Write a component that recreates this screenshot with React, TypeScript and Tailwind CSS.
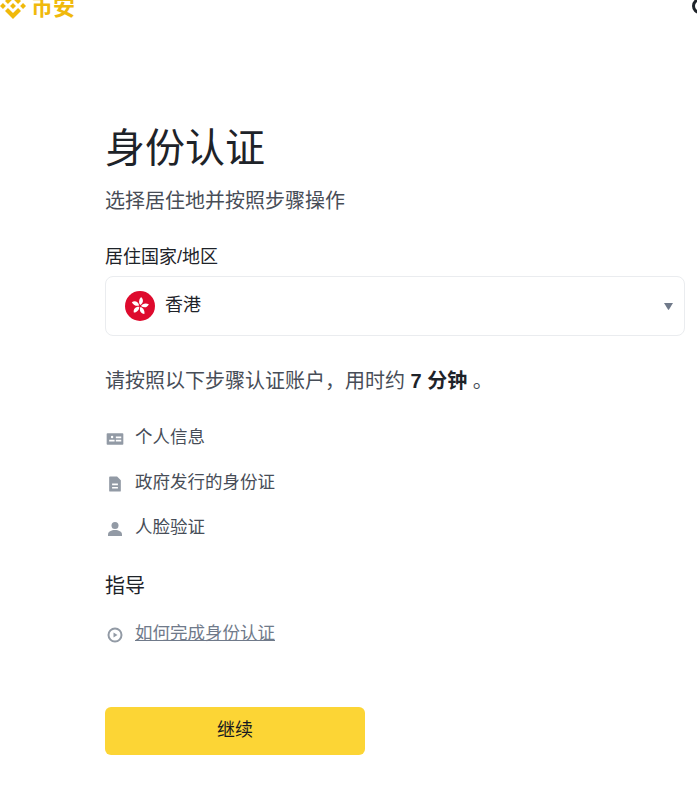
import type { ReactNode } from "react"

const font = "font-['Liberation_Sans','Noto_Sans_CJK_SC',sans-serif]"

const steps: { label: string; icon: ReactNode }[] = [
  {
    label: "个人信息",
    icon: (
      <path
        fillRule="evenodd"
        d="M3 5h18a1 1 0 0 1 1 1v12a1 1 0 0 1-1 1H3a1 1 0 0 1-1-1V6a1 1 0 0 1 1-1zm5.500 3a1.500 1.500 0 1 0 0 3 1.500 1.500 0 0 0 0-3zM5 13v2h6.500v-2H5zm8-4v2h6.500V9H13zm0 4v2h6.500v-2H13z"
      />
    ),
  },
  {
    label: "政府发行的身份证",
    icon: (
      <path
        fillRule="evenodd"
        d="M6 3h8.500L19 7.500V20a1 1 0 0 1-1 1H6a1 1 0 0 1-1-1V4a1 1 0 0 1 1-1zm2.500 8.500v2h7v-2h-7zm0 4v2h7v-2h-7z"
      />
    ),
  },
  {
    label: "人脸验证",
    icon: (
      <>
        <circle cx="12" cy="7.800" r="4.200" />
        <path d="M3.600 20.500v-2c0-3.300 4-5.300 8.400-5.300s8.400 2 8.400 5.300v2z" />
      </>
    ),
  },
]

function BinanceMark() {
  return (
    <svg viewBox="0 0 126.610 126.610" className="h-[26px] w-[26px] shrink-0 fill-[#F0B90B]">
      <path d="M38.730 53.200l24.590-24.580 24.600 24.600 14.300-14.310L63.320 0 24.430 38.890z" />
      <path d="M0 63.310l14.300-14.310 14.310 14.310-14.310 14.300z" />
      <path d="M38.730 73.410L63.320 98l24.600-24.600 14.310 14.290-38.900 38.910-38.910-38.880-.02-.02z" />
      <path d="M98 63.310l14.300-14.310 14.310 14.310-14.310 14.300z" />
      <path d="M77.830 63.300L63.320 48.780 52.590 59.510l-1.240 1.230-2.540 2.540 14.510 14.500 14.510-14.470z" />
    </svg>
  )
}

function HongKongFlag() {
  return (
    <svg viewBox="0 0 30 30" className="h-[30px] w-[30px] shrink-0">
      <circle cx="15" cy="15" r="15" fill="#DE0A2D" />
      <g fill="#fff">
        {[12, 84, 156, 228, 300].map((angle) => (
          <path
            key={angle}
            d="M15 14C12.800 12.300 12.300 9 14.200 6C17.400 7.800 17.800 11.300 15 14z"
            transform={`rotate(${angle} 15 15)`}
          />
        ))}
      </g>
    </svg>
  )
}

export default function App() {
  return (
    <div className={`h-[802px] overflow-hidden bg-white ${font}`}>
      <header className="flex h-[19px] items-end justify-between overflow-hidden">
        <div className="flex items-end gap-[5px]">
          <BinanceMark />
          <span className="text-[22px] leading-[22px] font-bold text-[#F0B90B]">币安</span>
        </div>
        <div className="-mt-[2px] -mr-[11px] h-[16px] w-[16px] self-start rounded-full border-[3px] border-[#1E2329]" />
      </header>

      <main className="pt-[105px] pr-3 pl-[105px]">
        <h1 className="text-[40px] leading-[48px] text-[#1E2329]">身份认证</h1>
        <p className="mt-[15px] text-[20px] leading-[28px] text-[#474D57]">选择居住地并按照步骤操作</p>

        <label className="mt-[29px] block text-[18px] leading-[26px] text-[#1E2329]">居住国家/地区</label>
        <div className="mt-[6px] flex h-[60px] w-[580px] items-center rounded-lg border border-[#EAECEF] pr-[11px] pl-[19px]">
          <HongKongFlag />
          <span className="ml-[10px] flex-1 pb-[2px] text-[18px] text-[#1E2329]">香港</span>
          <svg viewBox="0 0 9 7" className="h-[7px] w-[9px] fill-[#707A8A]">
            <path d="M0 0h9L5 6.500a.6.6 0 0 1-1 0z" />
          </svg>
        </div>

        <p className="mt-[31px] text-[20px] leading-[28px] text-[#474D57]">
          请按照以下步骤认证账户，用时约 <span className="font-bold text-[#1E2329]">7 分钟</span> 。
        </p>

        <ul className="mt-[29px] flex flex-col gap-[19px]">
          {steps.map((step) => (
            <li key={step.label} className="flex h-[26px] items-center gap-[10px] text-[17.500px] text-[#474D57]">
              <svg viewBox="0 0 24 24" className="mt-1 h-5 w-5 shrink-0 fill-[#929AA5]">
                {step.icon}
              </svg>
              {step.label}
            </li>
          ))}
        </ul>

        <h2 className="mt-[32px] text-[20px] leading-[28px] text-[#1E2329]">指导</h2>

        <a className="mt-[20px] flex h-[26px] items-center gap-[10px] text-[17.500px] text-[#707A8A]">
          <svg viewBox="0 0 20 20" className="mt-[3px] h-5 w-5 shrink-0 fill-none stroke-[#929AA5] stroke-2">
            <circle cx="10" cy="10" r="6.500" />
            <path d="M8.500 7.500v5l4-2.500z" fill="#929AA5" strokeWidth="0" />
          </svg>
          <span className="underline">如何完成身份认证</span>
        </a>

        <button className="mt-[61px] h-12 w-[260px] rounded-md bg-[#FCD535] pb-[2px] text-[18px] text-[#181A20]">继续</button>
      </main>
    </div>
  )
}
